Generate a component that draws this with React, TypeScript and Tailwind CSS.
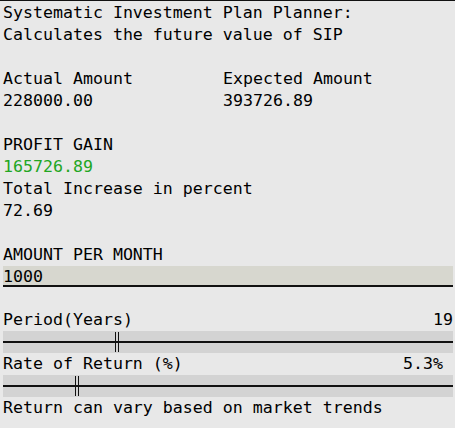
import { useState } from "react";

type SliderProps = { label: string; value: string; thumbLeft: number; valueClass?: string };

function Slider({ label, value, thumbLeft, valueClass }: SliderProps) {
  return (
    <>
      <div className="flex justify-between">
        <span>{label}</span>
        <span className={valueClass}>{value}</span>
      </div>
      <div className="relative h-[22px] bg-[#d3d3d3] flex items-center">
        <div className="h-[2px] w-full bg-[#111]" />
        <div
          className="absolute top-[1px] h-[20px] w-[4px] border-x border-[#111]"
          style={{ left: thumbLeft }}
        />
      </div>
    </>
  );
}

function App() {
  const [amount, setAmount] = useState("1000");
  return (
    <div
      className="w-[455px] h-[428px] bg-[#e8e8e8] border-t border-[#111] pt-[1px] pl-[3px] pr-[2px] text-[16.6px] leading-[22px] text-black"
      style={{ fontFamily: '"DejaVu Sans Mono", monospace' }}
    >
      <div>Systematic Investment Plan Planner:</div>
      <div>Calculates the future value of SIP</div>
      <div className="h-[22px]" />
      <div className="grid grid-cols-[220px_1fr]">
        <div>Actual Amount</div>
        <div>Expected Amount</div>
        <div>228000.00</div>
        <div>393726.89</div>
      </div>
      <div className="h-[22px]" />
      <div>PROFIT GAIN</div>
      <div className="text-[#22a622]">165726.89</div>
      <div>Total Increase in percent</div>
      <div>72.69</div>
      <div className="h-[22px]" />
      <div>AMOUNT PER MONTH</div>
      <input
        value={amount}
        onChange={(e) => setAmount(e.target.value)}
        className="block w-full h-[21px] bg-[#d7d7cf] border-b-2 border-[#111] pt-[2px] outline-none"
        style={{ fontFamily: '"DejaVu Sans Mono", monospace' }}
      />
      <div className="h-[22px]" />
      <Slider label="Period(Years)" value="19" thumbLeft={112} />
      <Slider label="Rate of Return (%)" value="5.3%" thumbLeft={72} valueClass="mr-[10px]" />
      <div>Return can vary based on market trends</div>
    </div>
  );
}

export default App;
